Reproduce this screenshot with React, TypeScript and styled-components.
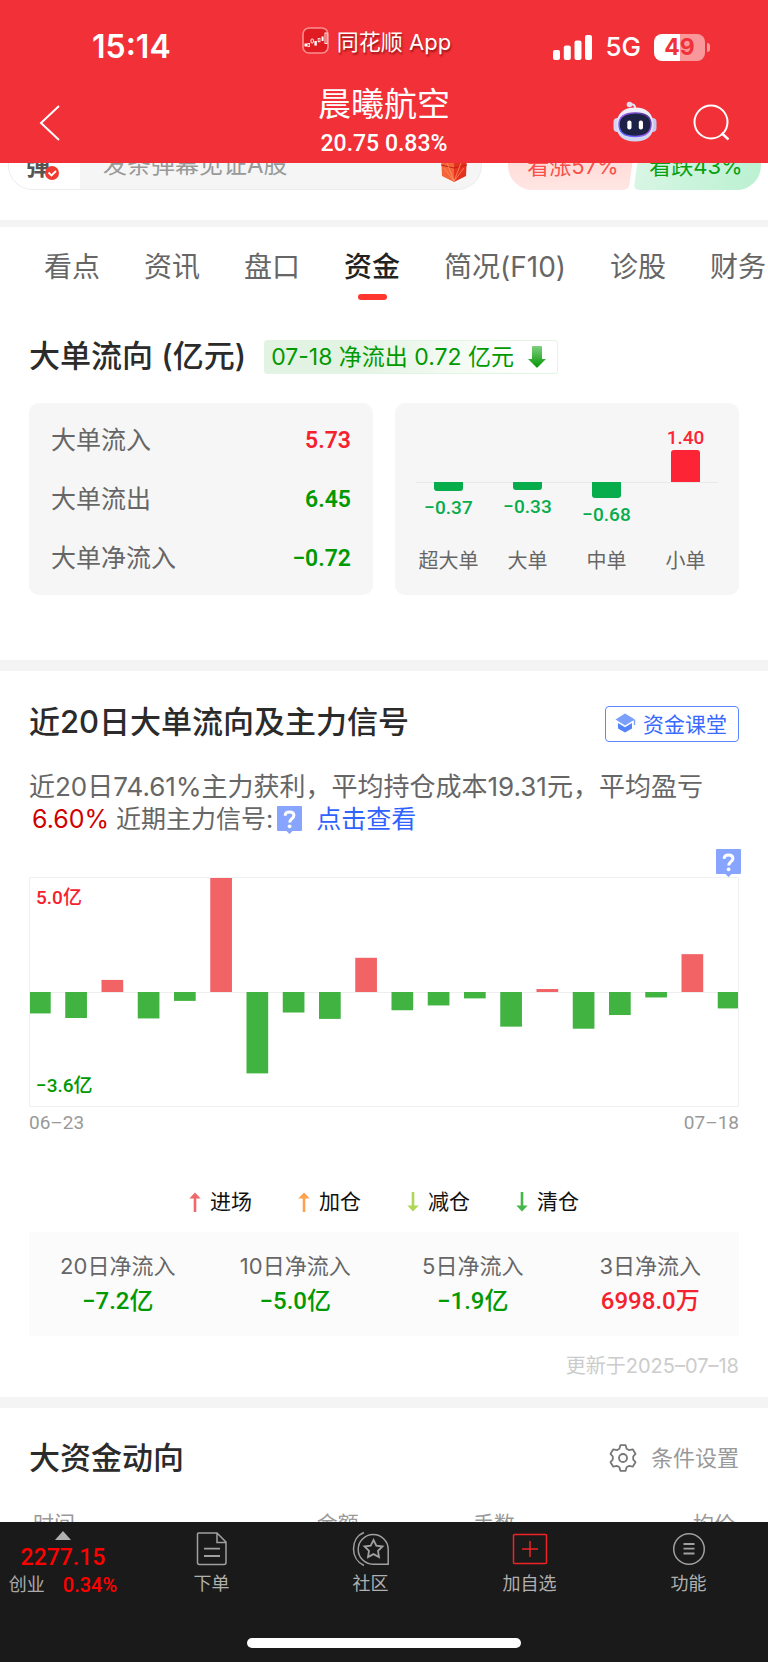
import React from "react";
import styled, { createGlobalStyle } from "styled-components";

const sans = `Inter, "Noto Sans CJK SC", sans-serif`;
const digits = `Roboto, "Noto Sans CJK SC", sans-serif`;

const red = "#f5222d";
const green = "#009900";
const brand = "#f23037";

const GlobalStyle = createGlobalStyle`
  * { box-sizing: border-box; }
  body { margin: 0; background: #fff; }
  button, input { font: inherit; color: inherit; }
  button { padding: 0; border: 0; background: none; cursor: pointer; }
  a { text-decoration: none; color: inherit; }
  h1, h2, p, dl, dt, dd, ul { margin: 0; padding: 0; font: inherit; }
  ul { list-style: none; }
  svg { display: block; flex: none; }
`;

const Screen = styled.div`
  display: flex;
  flex-direction: column;
  height: 100vh;
  font-family: ${sans};
  color: #666;
  background: #fff;
`;

/* ---------- header ---------- */

const Header = styled.header`
  position: relative;
  z-index: 1;
  flex: none;
  height: 163px;
  background: ${brand};
  color: #fff;
`;

const StatusBar = styled.div`
  display: grid;
  grid-template-columns: 1fr auto 1fr;
  align-items: center;
  height: 86px;
  padding: 8px 58px 0 43px;
`;

const Clock = styled.time`
  padding-left: 49px;
  font-size: 32px;
  line-height: 36px;
  font-weight: 600;
`;

const Brand = styled.div`
  display: flex;
  align-items: center;
  gap: 8px;
  height: 36px;
  margin-bottom: 14px;
  font-size: 22px;
  text-shadow: 1px 2px 2px rgba(90, 0, 0, 0.6);
`;

const Signals = styled.div`
  display: flex;
  align-items: center;
  justify-content: flex-end;
  gap: 13px;
  font-size: 26px;
  line-height: 36px;
  font-weight: 500;
`;

const BatteryBox = styled.div`
  display: flex;
  align-items: center;
  gap: 2px;
`;

const Battery = styled.span`
  width: 51px;
  height: 27px;
  border-radius: 8px;
  text-align: center;
  font-size: 23px;
  line-height: 27px;
  font-weight: 700;
  color: ${brand};
  background: linear-gradient(90deg, #fff 50%, #f8989b 50%);
`;

const BatteryTip = styled.span`
  width: 3px;
  height: 9px;
  border-radius: 0 4px 4px 0;
  background: #f8989b;
`;

const NavBar = styled.div`
  display: grid;
  grid-template-columns: 1fr auto 1fr;
  padding: 0 38px;
`;

const Actions = styled.div`
  display: flex;
  align-items: center;
  justify-content: flex-end;
  gap: 36px;
`;

const IconButton = styled.button`
  display: flex;
  align-items: flex-start;
`;

const BackButton = styled(IconButton)`
  padding-top: 19px;
`;

const StockTitle = styled.div`
  text-align: center;
`;

const StockName = styled.h1`
  font-size: 33px;
  line-height: 36px;
`;

const Quote = styled.p`
  margin-top: 8px;
  font-family: ${digits};
  font-size: 23px;
  line-height: 28px;
  font-weight: 500;
`;

/* ---------- scrolling content ---------- */

const Main = styled.main`
  flex: 1;
  min-height: 0;
  overflow: hidden auto;
  scrollbar-width: none;
`;

const DanmuRow = styled.div`
  display: flex;
  gap: 26px;
  margin-top: -22px;
  padding: 0 7px 30px 8px;
`;

const DanmuBox = styled.div`
  display: flex;
  flex: 1;
  height: 49px;
  border: 1px solid #ececec;
  border-radius: 25px;
  background: #f5f5f5;
  overflow: hidden;
`;

const DanmuToggle = styled.button`
  display: flex;
  align-items: center;
  width: 71px;
  padding: 0 0 2px 17px;
  background: #fff;
  font-size: 24px;
  font-weight: 700;
  color: #555;
`;

const DanmuInput = styled.input`
  flex: 1;
  min-width: 0;
  padding: 0 23px 2px;
  border: 0;
  outline: 0;
  background: transparent;
  font-size: 24px;
  &::placeholder { color: #999; opacity: 1; }
`;

const GiftButton = styled(IconButton)`
  align-items: center;
  padding: 0 14px 0 0;
`;

const VoteBox = styled.div`
  display: flex;
  gap: 5px;
  width: 253px;
  height: 49px;
  border-radius: 25px;
  overflow: hidden;
`;

const Vote = styled.button<{ $up?: boolean }>`
  position: relative;
  z-index: 0;
  flex: 1;
  padding: ${(p) => (p.$up ? "0 0 4px 6px" : "0 6px 4px 0")};
  font-size: 22px;
  color: ${(p) => (p.$up ? "#f9504a" : "#08a012")};
  &::before {
    content: "";
    position: absolute;
    z-index: -1;
    inset: 0 ${(p) => (p.$up ? "0 0 -30px" : "-30px 0 0")};
    border-radius: 5px;
    transform: skewX(-8deg);
    background: ${(p) =>
      p.$up
        ? "linear-gradient(#ffd5d2, #ffe6e3)"
        : "linear-gradient(100deg, #d9f6e5, #b4f0cd)"};
  }
`;

const Divider = styled.div<{ $thin?: boolean }>`
  height: ${(p) => (p.$thin ? 7 : 11)}px;
  background: #f4f4f4;
`;

const Tabs = styled.nav`
  display: flex;
  gap: 44px;
  padding: 20px 0 0 44px;
  overflow: hidden;
`;

const Tab = styled.a<{ $active?: boolean }>`
  display: flex;
  flex: none;
  flex-direction: column;
  align-items: center;
  font-size: 28px;
  line-height: 40px;
  font-weight: ${(p) => (p.$active ? 500 : 400)};
  color: ${(p) => (p.$active ? "#222" : "#666")};
  &::after {
    content: "";
    width: 29px;
    height: 6px;
    margin-top: 7px;
    border-radius: 3px;
    background: ${(p) => (p.$active ? "#ff362f" : "transparent")};
  }
`;

const Section = styled.section`
  padding: 0 29px;
`;

const FlowSection = styled(Section)`
  padding-top: 40px;
  padding-bottom: 65px;
`;

const TrendSection = styled(Section)`
  padding-top: 35px;
  padding-bottom: 19px;
`;

const FundsSection = styled(Section)`
  padding-top: 34px;
`;

const SectionHead = styled.div<{ $between?: boolean }>`
  display: flex;
  align-items: flex-start;
  justify-content: ${(p) => (p.$between ? "space-between" : "flex-start")};
  gap: 18px;
`;

const Heading = styled.h2`
  font-size: 31px;
  line-height: 32px;
  font-weight: 500;
  color: #2b2b2b;
`;

const FlowBadge = styled.p`
  display: flex;
  align-items: center;
  gap: 14px;
  height: 34px;
  padding: 0 11px 0 6px;
  border: 1px solid #e2f4e2;
  border-radius: 3px;
  background: linear-gradient(90deg, #e3f3e3 30%, #fff 90%);
  font-size: 23px;
  color: ${green};
`;

const BadgeText = styled.span`
  padding-bottom: 4px;
`;

const Cards = styled.div`
  display: grid;
  grid-template-columns: 1fr 1fr;
  gap: 22px;
  margin-top: 29px;
`;

const FlowCard = styled.dl`
  padding: 8px 22px 7px;
  border-radius: 10px;
  background: #f6f6f6;
`;

const FlowRow = styled.div`
  display: flex;
  justify-content: space-between;
  font-size: 25px;
  line-height: 59px;
`;

const FlowValue = styled.dd<{ $up?: boolean }>`
  font-family: ${digits};
  font-size: 23px;
  font-weight: 600;
  color: ${(p) => (p.$up ? red : green)};
`;

const OrderChart = styled.ul`
  display: grid;
  grid-template-columns: repeat(4, 1fr);
  padding: 0 14px;
  border-radius: 10px;
  background: linear-gradient(#e9e9e9, #e9e9e9) 50% 79px / calc(100% - 42px) 1px
      no-repeat, #f6f6f6;
`;

const OrderColumn = styled.li`
  display: flex;
  flex-direction: column;
  align-items: center;
`;

const OrderHalf = styled.div<{ $up?: boolean }>`
  display: flex;
  flex-direction: column;
  align-items: center;
  justify-content: ${(p) => (p.$up ? "flex-end" : "flex-start")};
  gap: ${(p) => (p.$up ? 0 : 5)}px;
  height: ${(p) => (p.$up ? 79 : 65)}px;
  font-family: ${digits};
  font-size: 19px;
  line-height: 24px;
  font-weight: 500;
  color: ${(p) => (p.$up ? "#fd2435" : "#07ac4b")};
`;

const OrderBar = styled.span<{ $up?: boolean }>`
  width: 29px;
  border-radius: ${(p) => (p.$up ? "3px 3px 0 0" : "0 0 3px 3px")};
  background: currentColor;
`;

const OrderName = styled.span`
  font-size: 20px;
  line-height: 28px;
`;

const ClassButton = styled.button`
  display: flex;
  align-items: center;
  gap: 7px;
  height: 36px;
  padding: 0 11px 2px 9px;
  border: 1px solid #5c88ff;
  border-radius: 4px;
  font-size: 21px;
  color: #3a69ff;
`;

const Summary = styled.p`
  margin-top: 29px;
  font-size: 26px;
  line-height: 32px;
`;

const SignalText = styled.span`
  font-size: 25px;
`;

const Gain = styled.strong`
  margin-left: 3px;
  font-weight: 400;
  color: #d00000;
`;

const InlineHelp = styled.button`
  margin: 0 14px 0 4px;
  vertical-align: -6px;
  height: 28px;
`;

const DetailLink = styled.a`
  color: #2f62ff;
`;

const ChartHelp = styled.div`
  display: flex;
  justify-content: flex-end;
  margin: 14px -2px 0 0;
`;

const ChartFrame = styled.div`
  position: relative;
  border: 1px solid #f0f0f0;
`;

const ChartLabel = styled.span<{ $up?: boolean }>`
  position: absolute;
  left: 6px;
  ${(p) => (p.$up ? "top: 8px;" : "bottom: 8px;")}
  font-family: ${digits};
  font-size: 19px;
  line-height: 24px;
  font-weight: 500;
  color: ${(p) => (p.$up ? red : green)};
`;

const DateAxis = styled.div`
  display: flex;
  justify-content: space-between;
  margin-top: 4px;
  font-family: ${digits};
  font-size: 19px;
  line-height: 24px;
  color: #999;
`;

const Legend = styled.ul`
  display: flex;
  justify-content: center;
  gap: 46px;
  margin-top: 55px;
  font-size: 21px;
  line-height: 24px;
  color: #111;
`;

const LegendItem = styled.li`
  display: flex;
  align-items: center;
  gap: 9px;
`;

const Totals = styled.dl`
  display: grid;
  grid-template-columns: repeat(4, 1fr);
  margin-top: 18px;
  padding: 20px 0 19px;
  background: #fbfbfb;
  text-align: center;
`;

const TotalName = styled.dt`
  font-size: 22px;
  line-height: 28px;
`;

const TotalValue = styled.dd<{ $up?: boolean }>`
  margin-top: 5px;
  font-family: ${digits};
  font-size: 24px;
  line-height: 32px;
  font-weight: 500;
  color: ${(p) => (p.$up ? red : green)};
`;

const Updated = styled.p`
  margin-top: 18px;
  font-size: 20px;
  line-height: 24px;
  text-align: right;
  color: #ccc;
`;

const SettingsButton = styled.button`
  display: flex;
  align-items: center;
  gap: 14px;
  font-size: 22px;
  line-height: 32px;
  color: #999;
`;

const FundsTable = styled.table`
  width: 100%;
  margin-top: 38px;
  border-collapse: collapse;
  table-layout: fixed;
  font-size: 21px;
  line-height: 24px;
  color: #999;
`;

const Th = styled.th<{ $width: number; $left?: boolean }>`
  width: ${(p) => p.$width}%;
  padding: 0 4px;
  font-weight: 400;
  text-align: ${(p) => (p.$left ? "left" : "right")};
`;

/* ---------- bottom bar ---------- */

const BottomBar = styled.footer`
  position: relative;
  z-index: 1;
  flex: none;
  height: 140px;
  background: #1a1a1a;
  color: #aaa;
`;

const BottomNav = styled.nav`
  display: flex;
  height: 116px;
`;

const IndexTile = styled.a`
  display: flex;
  flex-direction: column;
  align-items: center;
  width: 132px;
  padding: 9px 6px 0 0;
  font-size: 18px;
  line-height: 24px;
`;

const IndexValue = styled.span`
  margin-top: 4px;
  font-family: ${digits};
  font-size: 23px;
  line-height: 28px;
  font-weight: 500;
  color: #f00;
`;

const IndexRow = styled.span`
  display: flex;
  gap: 18px;
  margin-top: 1px;
`;

const IndexChange = styled.span`
  font-family: ${digits};
  font-size: 20px;
  font-weight: 500;
  color: #f00;
`;

const NavItem = styled.a`
  display: flex;
  flex: 1;
  flex-direction: column;
  align-items: center;
  gap: 4px;
  padding-top: 8px;
  font-size: 18px;
  line-height: 24px;
  color: #b0b0b0;
`;

const HomeIndicator = styled.div`
  width: 274px;
  height: 10px;
  margin: 0 auto;
  border-radius: 5px;
  background: #fff;
`;

/* ---------- icons ---------- */

const AppLogo = () => (
  <svg width="27" height="27" viewBox="0 0 27 27" fill="none">
    <rect x="1" y="1" width="25" height="25" rx="6" fill="#e01c22" stroke="#fa8f91" strokeWidth="1.6" />
    <path d="M2.5 18h2.5" stroke="#fff" strokeWidth="3" />
    <rect x="5.8" y="16.4" width="1.8" height="3" stroke="#fff" strokeWidth="0.8" />
    <rect x="9" y="12" width="2.4" height="4" rx="1" stroke="#fff" strokeWidth="0.9" />
    <path d="M13.6 14v4.6" stroke="#fff" strokeWidth="2.4" />
    <rect x="16.2" y="11.4" width="1.8" height="3.4" stroke="#fff" strokeWidth="0.8" />
    <path d="M20.6 9.5v4.5" stroke="#fff" strokeWidth="2" />
    <rect x="23" y="6" width="2" height="10.5" stroke="#fff" strokeWidth="0.9" />
  </svg>
);

const SignalIcon = () => (
  <svg width="39" height="25" viewBox="0 0 39 25" fill="#fff">
    <rect x="0" y="15" width="7" height="10" rx="2" />
    <rect x="10.8" y="10.5" width="7" height="14.5" rx="2" />
    <rect x="21.5" y="5.5" width="7" height="19.5" rx="2" />
    <rect x="32" y="0" width="7" height="25" rx="2" />
  </svg>
);

const BackIcon = () => (
  <svg width="22" height="36" viewBox="0 0 22 36" fill="none" stroke="#fff" strokeWidth="2">
    <path d="M21 1 3 18l18 17" />
  </svg>
);

const RobotIcon = () => (
  <svg width="44" height="42" viewBox="0 0 44 42" fill="none">
    <defs>
      <linearGradient id="shell" x1="0" y1="0" x2="0" y2="1">
        <stop offset="0" stopColor="#f5f1fa" />
        <stop offset="1" stopColor="#cdd3f3" />
      </linearGradient>
      <linearGradient id="rim" x1="0" y1="1" x2="1" y2="0">
        <stop offset="0" stopColor="#4c63ff" />
        <stop offset="0.5" stopColor="#a45cf6" />
        <stop offset="1" stopColor="#3a2d7c" />
      </linearGradient>
    </defs>
    <path d="M16.500 3.500c4-1 6 1 6 5" stroke="#e7e1f3" strokeWidth="2" />
    <circle cx="16.500" cy="3.500" r="2.800" fill="#e4dff2" />
    <rect x="0.500" y="17" width="8" height="14" rx="4" fill="#d5d4f1" />
    <rect x="35.500" y="17" width="8" height="14" rx="4" fill="#c3c8ef" />
    <path d="M22 6.500c11.500 0 18.500 6 18.500 17.500S33.500 40.500 22 40.500 3.500 35.500 3.500 24 10.500 6.500 22 6.500Z" fill="url(#shell)" />
    <path d="M22 12c11 0 16 3.500 16 11.500S33 35.500 22 35.500 6 31.500 6 23.500 11 12 22 12Z" fill="#1c2145" stroke="url(#rim)" strokeWidth="1.400" />
    <rect x="14.300" y="19.500" width="4.200" height="9" rx="2" fill="#fff" />
    <rect x="25.800" y="19.500" width="4.200" height="9" rx="2" fill="#fff" />
  </svg>
);

const SearchIcon = () => (
  <svg width="37" height="37" viewBox="0 0 37 37" fill="none" stroke="#fff" strokeWidth="2">
    <circle cx="18" cy="18" r="16.500" />
    <path d="m28.500 29 7 6.500" strokeWidth="2.400" />
  </svg>
);

const CheckBadge = styled.svg.attrs({ width: 14, height: 14, viewBox: "0 0 14 14" })`
  margin: 16px 0 0 -5px;
`;

const GiftIcon = () => (
  <svg width="26" height="32" viewBox="0 0 26 32">
    <path d="M0 6 13 10v22L1 26Z" fill="#f4663a" />
    <path d="m26 6-13 4v22l12-6Z" fill="#e5321f" />
    <path d="M0 6 13 1l13 5-13 5Z" fill="#ff9a5a" />
    <path d="M0 15l13 3 13-3" stroke="#c81e14" fill="none" />
    <path d="m3 18 10 13 10-13M6 13l7 18 7-18" stroke="#ff9060" strokeWidth="0.800" fill="none" />
  </svg>
);

const DownArrow = () => (
  <svg width="18" height="22" viewBox="0 0 18 22">
    <defs>
      <linearGradient id="fall" x1="0" y1="0" x2="0" y2="1">
        <stop offset="0" stopColor="#7fd07f" />
        <stop offset="1" stopColor="#049604" />
      </linearGradient>
    </defs>
    <path d="M5 0h8q1 0 1 1v12h4L9.700 21.300q-.7.700-1.400 0L0 13h4V1q0-1 1-1Z" fill="url(#fall)" />
  </svg>
);

const CapIcon = () => (
  <svg width="21" height="20" viewBox="0 0 21 20">
    <path d="M10 0.500 20 6.500 10 12.500 0.500 6.500Z" fill="#7aa0fb" />
    <path d="M3 10v5.500l7 4 7-4V10l-7 4.300Z" fill="#5584fa" />
    <path d="M19.500 7v5" stroke="#7aa0fb" strokeWidth="1.400" />
  </svg>
);

const HelpIcon = () => (
  <svg width="25" height="28" viewBox="0 0 25 28">
    <path d="M1 0h23q1 0 1 1v23q0 1-1 1h-8.500l-3 3-3-3H1q-1 0-1-1V1q0-1 1-1Z" fill="#87a4ff" />
    <path d="M8.200 9.700C8.200 7.200 10 6 12.500 6s4.400 1.300 4.400 3.500c0 3-4.200 3.500-4.200 7" fill="none" stroke="#fff" strokeWidth="3" />
    <circle cx="12.600" cy="20.300" r="1.900" fill="#fff" />
  </svg>
);

const TradeArrow = ({ color, down }: { color: string; down?: boolean }) => (
  <svg width="12" height="20" viewBox="0 0 12 20">
    <g transform={down ? "rotate(180 6 10)" : undefined}>
      <path d="M6 0.500 11.700 6.500H0.300Z" fill={color} />
      <path d="M6 5v15" stroke={color} strokeWidth="2.600" />
    </g>
  </svg>
);

const GearIcon = () => (
  <svg width="28" height="28" viewBox="0 0 28 28" fill="none" stroke="#777" strokeWidth="1.800" strokeLinejoin="round">
    <path d="M11.400 1.200h5.200l1 3.500 2.600 1.500 3.500-.9 2.800 4.500-2.300 2.700v3l2.300 2.700-2.800 4.500-3.500-.9-2.600 1.500-1 3.500h-5.200l-1-3.500-2.600-1.500-3.500.9-2.800-4.500 2.300-2.700v-3L1.500 9.800l2.800-4.500 3.500.9 2.600-1.500Z" />
    <circle cx="14" cy="14" r="4" />
  </svg>
);

const navIcon = { width: 38, height: 38, viewBox: "0 0 38 38", fill: "none", stroke: "#a0a0a0", strokeWidth: 1.5 };

const OrderIcon = () => (
  <svg {...navIcon}>
    <path d="M5.500 3h18.500l9 9v20.500q0 2-2 2H6.500q-2 0-2-2V4q0-1 1-1ZM24 3v9.500h9" />
    <path d="M11 18.700h16M11 26h16" strokeWidth="1.800" />
  </svg>
);

const CommunityIcon = () => (
  <svg {...navIcon}>
    <path d="M36.200 34.200H21A15 14.800 0 1 1 36.200 19Z" />
    <path d="M12 2.500C-2 8-2 29 12 35.500" />
    <path d="m21.500 10 2.800 5.600 6.200.9-4.500 4.400 1 6.100-5.500-2.900-5.500 2.900 1-6.100-4.500-4.400 6.200-.9Z" strokeWidth="1.800" />
  </svg>
);

const AddIcon = () => (
  <svg {...navIcon} stroke="#ee2326">
    <rect x="2.500" y="4.500" width="33" height="29" rx="1" />
    <path d="M19 11v16M11 19h16" />
  </svg>
);

const MenuIcon = () => (
  <svg {...navIcon}>
    <circle cx="19" cy="19" r="15.300" />
    <path d="M13.500 14h11M13.500 18.700h11M13.500 23.500h11" strokeWidth="1.800" />
  </svg>
);

/* ---------- data ---------- */

const tabs = ["看点", "资讯", "盘口", "资金", "简况(F10)", "诊股", "财务"];

const flows = [
  { name: "大单流入", value: "5.73", up: true },
  { name: "大单流出", value: "6.45" },
  { name: "大单净流入", value: "−0.72" },
];

const orders = [
  { name: "超大单", value: -0.37 },
  { name: "大单", value: -0.33 },
  { name: "中单", value: -0.68 },
  { name: "小单", value: 1.4 },
];

const daily = [
  -0.94, -1.14, 0.53, -1.16, -0.39, 5, -3.57, -0.9, -1.18, 1.5, -0.8, -0.59,
  -0.28, -1.52, 0.13, -1.61, -1.01, -0.24, 1.66, -0.72,
];

const legend = [
  { name: "进场", color: "#f0696a" },
  { name: "加仓", color: "#ffa04d" },
  { name: "减仓", color: "#aed657", down: true },
  { name: "清仓", color: "#45b649", down: true },
];

const totals = [
  { name: "20日净流入", value: "−7.2亿" },
  { name: "10日净流入", value: "−5.0亿" },
  { name: "5日净流入", value: "−1.9亿" },
  { name: "3日净流入", value: "6998.0万", up: true },
];

const DailyChart = () => {
  const half = 114;
  return (
    <svg width="100%" height="228" viewBox="0 0 708 228" preserveAspectRatio="none" role="img" aria-label="近20日大单流向">
      <path d="M0 114.500H708" stroke="#eee" />
      {daily.map((v, i) => {
        const h = (Math.abs(v) / 5) * half;
        return (
          <rect
            key={i}
            x={-1 + i * 36.25}
            y={v > 0 ? half - h : half}
            width="21.700"
            height={h}
            fill={v > 0 ? "#f16365" : "#41b341"}
          />
        );
      })}
    </svg>
  );
};

const OrderBars = () => (
  <OrderChart>
    {orders.map(({ name, value }) => {
      const up = value > 0;
      const height = Math.round(Math.abs(value) * 23);
      return (
        <OrderColumn key={name}>
          <OrderHalf $up>
            {up && <span>{value.toFixed(2)}</span>}
            {up && <OrderBar $up style={{ height }} />}
          </OrderHalf>
          <OrderHalf>
            {!up && <OrderBar style={{ height }} />}
            {!up && <span>{`−${Math.abs(value).toFixed(2)}`}</span>}
          </OrderHalf>
          <OrderName>{name}</OrderName>
        </OrderColumn>
      );
    })}
  </OrderChart>
);

export default function App() {
  return (
    <Screen>
      <GlobalStyle />
      <Header>
        <StatusBar>
          <Clock>15:14</Clock>
          <Brand>
            <AppLogo />
            同花顺 App
          </Brand>
          <Signals>
            <SignalIcon />
            <span>5G</span>
            <BatteryBox>
              <Battery>49</Battery>
              <BatteryTip />
            </BatteryBox>
          </Signals>
        </StatusBar>
        <NavBar>
          <BackButton aria-label="返回"><BackIcon /></BackButton>
          <StockTitle>
            <StockName>晨曦航空</StockName>
            <Quote>20.75 0.83%</Quote>
          </StockTitle>
          <Actions>
            <IconButton aria-label="智能助手"><RobotIcon /></IconButton>
            <IconButton aria-label="搜索"><SearchIcon /></IconButton>
          </Actions>
        </NavBar>
      </Header>

      <Main>
        <DanmuRow>
          <DanmuBox>
            <DanmuToggle>
              弹
              <CheckBadge>
                <circle cx="7" cy="7" r="7" fill="#f13a30" />
                <path d="m3.500 6.500 3 3 4.500-4.500" fill="none" stroke="#fff" strokeWidth="1.800" />
              </CheckBadge>
            </DanmuToggle>
            <DanmuInput aria-label="弹幕" placeholder="发条弹幕见证A股" />
            <GiftButton aria-label="礼物"><GiftIcon /></GiftButton>
          </DanmuBox>
          <VoteBox>
            <Vote $up>看涨57%</Vote>
            <Vote>看跌43%</Vote>
          </VoteBox>
        </DanmuRow>
        <Divider $thin />

        <Tabs>
          {tabs.map((t) => (
            <Tab key={t} href="#" $active={t === "资金"}>{t}</Tab>
          ))}
        </Tabs>

        <FlowSection>
          <SectionHead>
            <Heading>大单流向 (亿元)</Heading>
            <FlowBadge>
              <BadgeText>07-18 净流出 0.72 亿元</BadgeText>
              <DownArrow />
            </FlowBadge>
          </SectionHead>
          <Cards>
            <FlowCard>
              {flows.map((f) => (
                <FlowRow key={f.name}>
                  <dt>{f.name}</dt>
                  <FlowValue $up={f.up}>{f.value}</FlowValue>
                </FlowRow>
              ))}
            </FlowCard>
            <OrderBars />
          </Cards>
        </FlowSection>
        <Divider />

        <TrendSection>
          <SectionHead $between>
            <Heading>近20日大单流向及主力信号</Heading>
            <ClassButton>
              <CapIcon />
              资金课堂
            </ClassButton>
          </SectionHead>
          <Summary>
            近20日74.61%主力获利，平均持仓成本19.31元，平均盈亏
            <SignalText>
              <Gain>6.60%</Gain> 近期主力信号:
              <InlineHelp aria-label="说明"><HelpIcon /></InlineHelp>
              <DetailLink href="#">点击查看</DetailLink>
            </SignalText>
          </Summary>
          <ChartHelp>
            <IconButton aria-label="图表说明"><HelpIcon /></IconButton>
          </ChartHelp>
          <ChartFrame>
            <DailyChart />
            <ChartLabel $up>5.0亿</ChartLabel>
            <ChartLabel>−3.6亿</ChartLabel>
          </ChartFrame>
          <DateAxis>
            <span>06–23</span>
            <span>07–18</span>
          </DateAxis>
          <Legend>
            {legend.map((l) => (
              <LegendItem key={l.name}>
                <TradeArrow color={l.color} down={l.down} />
                {l.name}
              </LegendItem>
            ))}
          </Legend>
          <Totals>
            {totals.map((t) => (
              <div key={t.name}>
                <TotalName>{t.name}</TotalName>
                <TotalValue $up={t.up}>{t.value}</TotalValue>
              </div>
            ))}
          </Totals>
          <Updated>更新于2025–07–18</Updated>
        </TrendSection>
        <Divider />

        <FundsSection>
          <SectionHead $between>
            <Heading>大资金动向</Heading>
            <SettingsButton>
              <GearIcon />
              条件设置
            </SettingsButton>
          </SectionHead>
          <FundsTable>
            <thead>
              <tr>
                <Th $width={15} $left>时间</Th>
                <Th $width={32}>金额</Th>
                <Th $width={22}>手数</Th>
                <Th $width={31}>均价</Th>
              </tr>
            </thead>
          </FundsTable>
        </FundsSection>
      </Main>

      <BottomBar>
        <BottomNav>
          <IndexTile href="#">
            <svg width="16" height="9" viewBox="0 0 16 9"><path d="M8 0l8 9H0Z" fill="#b0b0b0" /></svg>
            <IndexValue>2277.15</IndexValue>
            <IndexRow>
              <span>创业</span>
              <IndexChange>0.34%</IndexChange>
            </IndexRow>
          </IndexTile>
          <NavItem href="#"><OrderIcon />下单</NavItem>
          <NavItem href="#"><CommunityIcon />社区</NavItem>
          <NavItem href="#"><AddIcon />加自选</NavItem>
          <NavItem href="#"><MenuIcon />功能</NavItem>
        </BottomNav>
        <HomeIndicator />
      </BottomBar>
    </Screen>
  );
}
